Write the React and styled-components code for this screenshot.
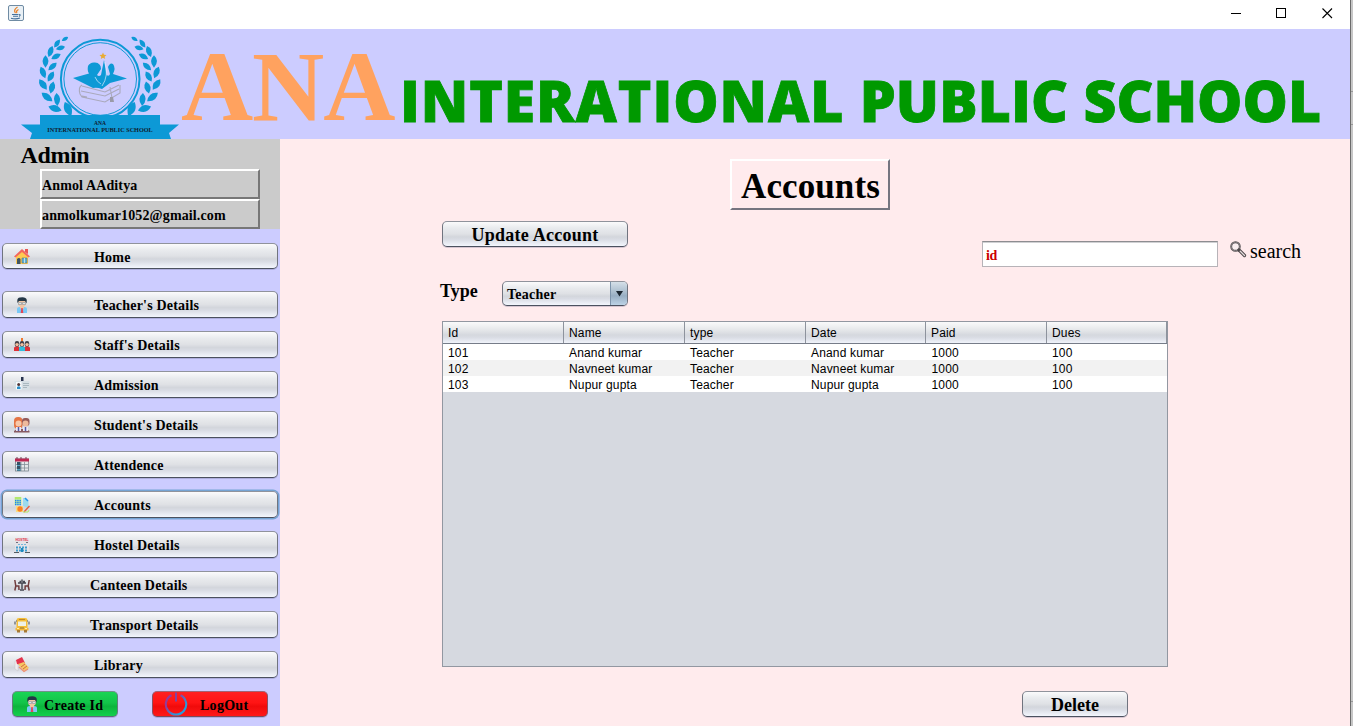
import React from "react";
import styled, { createGlobalStyle, css } from "styled-components";

const Global = createGlobalStyle`
  *, *::before, *::after { box-sizing: border-box; }
  html, body { margin: 0; padding: 0; overflow: hidden; }
  body { background: #c3c3c3; }
  button, input { margin: 0; padding: 0; font: inherit; color: inherit; outline: none; }
`;

const serif = `"Liberation Serif", "Times New Roman", serif`;
const sans = `"Liberation Sans", Arial, sans-serif`;

const Desktop = styled.div`
  display: flex;
  width: 1353px;
  height: 726px;
  background: #c6c6c6;
`;

const Window = styled.div`
  display: flex;
  flex-direction: column;
  width: 1351px;
  height: 726px;
  border-right: 1px solid #6b6b6b;
  font-family: ${serif};
  color: #000;
`;

const Behind = styled.div`
  flex: 1;
  display: flex;
  flex-direction: column;
  padding-top: 91px;
`;

const BehindLine = styled.div`
  height: 1px;
  margin-bottom: ${(p) => p.$after}px;
  background: #989898;
`;

const TitleBar = styled.div`
  display: flex;
  align-items: flex-start;
  justify-content: space-between;
  height: 29px;
  padding: 5px 17px 0 8px;
  background: #fff;
`;

const Controls = styled.div`
  display: flex;
  gap: 35px;
  padding-top: 3px;
`;

const Header = styled.header`
  display: flex;
  height: 110px;
  background: #ccccff;
`;

const Crest = styled.svg`
  flex: none;
  display: block;
`;

const Ana = styled.div`
  width: 220px;
  flex: none;
  height: 110px;
  padding: 7px 0 0 1px;
  font: bold 100px/102px ${serif};
  letter-spacing: -1.1px;
  color: #ffa25f;
`;

const School = styled.div`
  flex: none;
  height: 110px;
  padding-top: 24px;
  font: 800 57px/94px "Open Sans", sans-serif;
  letter-spacing: 0.5px;
  -webkit-text-stroke: 0.8px #009900;
  white-space: nowrap;
  color: #009900;
`;

const Word = styled.span`
  letter-spacing: ${(p) => p.$ls}px;
`;

const Body = styled.div`
  display: flex;
  flex: 1;
  min-height: 0;
`;

const Sidebar = styled.aside`
  width: 280px;
  flex: none;
  background: #ccccff;
`;

const Profile = styled.section`
  height: 90px;
  background: #cbcbcb;
`;

const Role = styled.div`
  height: 30px;
  padding: 2px 0 0 20.5px;
  font: bold 24px/28px ${serif};
  letter-spacing: -0.4px;
`;

const raised = css`
  border: 2px solid;
  border-color: #fff #777 #777 #fff;
`;

const ProfileField = styled.div`
  ${raised}
  width: 220px;
  height: 30px;
  margin-left: 40px;
  font: bold 14px/28px ${serif};
  letter-spacing: 0.13px;
  padding-top: 1px;
  white-space: nowrap;
`;

const tones = {
  plain: css`
    background: linear-gradient(#fbfbfc 0%, #e9ebee 25%, #dfe1e5 50%, #d3d6dc 62%, #d8dbe3 72%, #f3f6fd 100%);
    border-color: #90939c #70747f #4b515f #70747f;
  `,
  green: css`
    background: linear-gradient(#19d455 0%, #12c449 45%, #0cb43d 60%, #12d04d 100%);
    border-color: #6f9389 #60807c #5d6a7b #60807c;
  `,
  red: css`
    background: linear-gradient(#ff2020 0%, #ff1414 45%, #f00b0b 60%, #ff1919 100%);
    border-color: #a26473 #8a5262 #7b4a5d #8a5262;
  `,
};

const NimbusButton = styled.button`
  display: flex;
  align-items: center;
  width: ${(p) => p.$w}px;
  height: ${(p) => p.$h || 27}px;
  flex: none;
  border: 1px solid;
  border-radius: 5px;
  box-shadow: 0 1px 0 rgba(70, 70, 110, 0.22);
  ${(p) => tones[p.$tone || "plain"]}
  ${(p) =>
    p.$focused &&
    css`
      box-shadow: 0 0 0 1.5px #74a3d3;
    `}
`;

const NavButton = styled(NimbusButton)`
  padding-left: 11px;
  font: bold 14px/24px ${serif};
  white-space: nowrap;
`;

const NavLabel = styled.span`
  margin-left: ${(p) => p.$gap || 64}px;
  padding-top: 2px;
  letter-spacing: 0.2px;
`;

const Nav = styled.nav`
  display: flex;
  flex-direction: column;
  gap: 13px;
  padding: 14px 0 0 2px;

  & > :first-child {
    height: 26px;
    margin-bottom: 9px;
  }

  & > :first-child ${NavLabel} {
    padding-top: 3px;
  }
`;

const SessionRow = styled.div`
  display: flex;
  gap: 34px;
  padding: 13px 0 0 12px;
`;

const SessionButton = styled(NimbusButton)`
  padding-left: 11px;
  gap: ${(p) => p.$gap}px;
  font: bold 14px/21px ${serif};
  white-space: nowrap;

  span {
    padding-top: 3px;
    letter-spacing: 0.28px;
  }
`;

const Main = styled.main`
  flex: 1;
  padding: 20px 0 0 162px;
  background: #ffebed;
`;

const PageTitle = styled.h1`
  ${raised}
  border-color: #fff #757580 #757580 #fff;
  width: 160px;
  height: 51px;
  margin: 0 0 11px 288px;
  padding: 5px 0 0 1px;
  font: bold 35px/42px ${serif};
  letter-spacing: 0.1px;
  text-align: center;
`;

const ActionRow = styled.div`
  display: flex;
  align-items: flex-start;
  height: 60px;
`;

const ActionButton = styled(NimbusButton)`
  justify-content: center;
  font: bold 18px/22px ${serif};
  letter-spacing: ${(p) => p.$ls || 0}px;

  span {
    padding-top: 2px;
  }
`;

const SearchInput = styled.input`
  width: 236px;
  height: 26px;
  margin: 20px 0 0 354px;
  padding: 3px 0 0 3px;
  border: 1px solid #b7b3b8;
  border-top-color: #8d8d91;
  background: #fff;
  box-shadow: inset 0 1px 0 #d0d0d3;
  font: bold 14px/20px ${serif};
  letter-spacing: -0.4px;
  color: #cc0000;
`;

const SearchLabel = styled.div`
  display: flex;
  gap: 3px;
  margin: 18px 0 0 12px;
  font: 20px/24px ${serif};

  svg {
    margin-top: 2px;
  }
`;

const FilterRow = styled.div`
  display: flex;
  height: 40px;
  margin-left: -2px;
`;

const FilterLabel = styled.label`
  width: 62px;
  font: bold 18px/20px ${serif};
`;

const Select = styled(NimbusButton)`
  padding-left: 4px;
  justify-content: space-between;
  overflow: hidden;
  font: bold 14px/20px ${serif};
  letter-spacing: 0.25px;

  span {
    padding-top: 2px;
  }
`;

const SelectArrow = styled.div`
  display: flex;
  align-items: center;
  justify-content: center;
  width: 17px;
  height: 100%;
  border-left: 1px solid #7e94ab;
  background: linear-gradient(#d5dfe8 0%, #a9bccd 45%, #98aec3 60%, #bdd3e6 100%);
`;

const TablePane = styled.div`
  width: 726px;
  height: 346px;
  border: 1px solid #9297a1;
  background: #d6d9e0;
  font: 12px/16px ${sans};
`;

const HeadRow = styled.div`
  display: grid;
  grid-template-columns: 121px 121px 121px 120px 121px 120px;
  height: 22px;
  border-bottom: 1px solid #767c88;
  background: linear-gradient(#fafafb 0%, #e4e6e9 40%, #d5d8de 62%, #dadde5 75%, #f0f3fa 100%);
`;

const HeadCell = styled.div`
  padding: 3px 0 0 5px;
  border-right: 1px solid #8e939d;
  letter-spacing: 0.15px;
`;

const DataRow = styled.div`
  display: grid;
  grid-template-columns: 121px 121px 121px 120.5px 120.5px 120px;
  height: 16px;
  background: #fff;

  &:nth-child(odd) {
    background: #f2f2f2;
  }
`;

const DataCell = styled.div`
  padding: 1px 0 0 5px;
  letter-spacing: 0.16px;
  white-space: nowrap;
`;

const Footer = styled.div`
  padding: 24px 0 0 580px;
`;

const Leaf = ({ x, y, r, s = 1 }) => (
  <path d="M0 -6.2Q6 -.5 0 6.2Q-6 -.5 0 -6.2Z" transform={`translate(${x} ${y}) rotate(${r}) scale(${s})`} />
);

const leaves = [
  [65, 10.5, 58, 0.6], [57, 15, 35, 0.8], [60.5, 19.5, 74, 0.75],
  [50.5, 23, 20, 0.95], [56, 28, 62, 0.85], [45.5, 33, 0, 1.0],
  [52.5, 38, 48, 0.9], [43, 44, -22, 1.0], [50.8, 48, 30, 0.95],
  [43, 56, -35, 1.05], [52, 59, 14, 1.0], [47, 68.5, -52, 1.1],
  [57, 71, -4, 1.05], [55, 80, -74, 1.1], [68, 80.5, -24, 1.25],
];

const Logo = () => (
  <Crest width="180" height="110" viewBox="0 0 180 110">
    <g fill="#0d99d6">
      {leaves.map(([x, y, r, s]) => (
        <Leaf key={`l${x}-${y}`} x={x} y={y - 0.5} r={r} s={s} />
      ))}
      <g transform="translate(199.500 0) scale(-1 1)">
        {leaves.map(([x, y, r, s]) => (
          <Leaf key={`r${x}-${y}`} x={x} y={y - 0.5} r={r} s={s} />
        ))}
      </g>
      <circle cx="100.200" cy="50" r="39.300" fill="none" stroke="#0d99d6" strokeWidth="2" />
      <circle cx="100.200" cy="50" r="36.300" fill="none" stroke="#0d99d6" strokeWidth="1" />
      <path d="M21 95.500H40V86H160V95.500H179L169 104L171 110H30L32 104Z" />
      <path d="M73 49L89 44.500Q87 42 88 37Q90 33 95 33.500Q101 34 101 40L97 46Q99 48 101 46L104 31L106.500 46Q109 48 110 45L108 38Q110 33 113 35Q116 39 113 45L127 49.500L110 54L102 60Q97 58 93 59Z" />
    </g>
    <path d="M95 48Q97 53 101 55M105 33Q109 47 102 57" fill="none" stroke="#dcecff" strokeWidth=".7" />
    <g fill="none" stroke="#aaa9bc" strokeWidth="1.100">
      <path d="M82 56Q78 58 80 65L82 68L105 73L120 64V56M82 57L105 63L119 56M81 62L105 67L119 60M82 67L87 68M110 58L112 69" />
    </g>
    <path d="M110 68L113 68L114 73H110Z" fill="#9a9aa8" />
    <path d="M103 23.500L104 25.800L106.500 26L104.600 27.700L105.200 30L103 28.800L100.800 30L101.300 27.700L99.500 26L102 25.800Z" fill="#e8ac35" />
    <g fill="#10202e" fontFamily="Liberation Serif, serif" fontWeight="bold" textAnchor="middle">
      <text x="100" y="96.300" fontSize="5.500" textLength="12">ANA</text>
      <text x="100" y="103" fontSize="6.300" textLength="105.500" lengthAdjust="spacingAndGlyphs">INTERNATIONAL PUBLIC SCHOOL</text>
    </g>
  </Crest>
);

const JavaIcon = () => (
  <svg width="16" height="16" viewBox="0 0 16 16">
    <rect x=".5" y=".5" width="15" height="15" rx="1.500" fill="#e9f0f5" stroke="#6f8ba3" />
    <path d="M9.500 2Q5 5 7.500 8M10.500 4.500Q7.500 6 9 8" fill="none" stroke="#e8822b" strokeWidth="1.300" />
    <path d="M4 9.500H10.500M5 11.300H10M3 13.300Q8 14.500 12 13M11 9.500Q13.500 9.500 11 11.500" fill="none" stroke="#44719c" strokeWidth="1.100" />
  </svg>
);

const Icon = ({ children }) => (
  <svg width="16" height="16" viewBox="0 0 16 16">
    {children}
  </svg>
);

const Person = () => (
  <>
    <path d="M3 16V12Q3 10 6 10H10Q13 10 13 12V16Z" fill="#79c9f6" />
    <path d="M6 9H10V11L8 13L6 11Z" fill="#f3c4a1" />
    <path d="M7.300 11H8.700L9.300 16H6.700Z" fill="#e14858" />
    <circle cx="8" cy="6" r="4" fill="#f0c6a5" />
    <path d="M3.500 6Q2.500 1 6 .5Q12 -.5 12.800 3L12.500 6.500L11 4L5 4Z" fill="#243746" />
    <path d="M4.500 5.500H7.500V7.500H4.500ZM8.500 5.500H11.500V7.500H8.500Z" fill="#d9e3e8" stroke="#7b8790" strokeWidth=".5" />
  </>
);

const icons = {
  home: (
    <Icon>
      <path d="M2 8L8 3L14 8V16H2Z" fill="#ffca50" />
      <path d="M11 1H14V6L11 4Z" fill="#e95755" />
      <path d="M0 8.500L8 1L16 8.500L14.500 9.500L8 4L1.500 9.500Z" fill="#f3675e" />
      <path d="M3 16V11Q5 9 6.500 11V16Z" fill="#405563" />
      <path d="M8 10H13V15H8Z" fill="#5cafd2" stroke="#59727e" strokeWidth=".6" />
      <path d="M10.500 10V15" stroke="#e7f4fa" strokeWidth=".7" />
    </Icon>
  ),
  teacher: <Icon><Person /></Icon>,
  staff: (
    <Icon>
      <path d="M7 1H9V5H7Z" fill="#ee7931" />
      {[3, 13, 8].map((x) => (
        <g key={x}>
          <rect x={x - 2.2} y="4" width="4.400" height="6" rx="2" fill="#45434b" />
          <circle cx={x} cy="7.600" r="1.700" fill="#f0bf9d" />
          <path d={`M${x - 3} 14V10.500Q${x} 8.500 ${x + 3} 10.500V14Z`} fill={x === 8 ? "#31bddd" : "#dd3038"} />
        </g>
      ))}
    </Icon>
  ),
  admission: (
    <Icon>
      <rect x=".5" y="4" width="15" height="9" fill="#d5dfe4" />
      <path d="M7 0H9.500V4H7Z" fill="#28334e" />
      <rect x="2" y="5" width="5.500" height="7.500" fill="#f5fafc" />
      <circle cx="4.700" cy="7.600" r="1.500" fill="#53383a" />
      <path d="M3 12V10Q4.700 8.500 6.500 10V12Z" fill="#2b8fc9" />
      <path d="M9 6.500H15M9 8.500H15M9 10.500H13" stroke="#a9b8bf" />
    </Icon>
  ),
  students: (
    <Icon>
      <path d="M0 15.500H15.500V14L12 12H3L0 14Z" fill="#875a63" />
      <rect x="0" y="0" width="8.500" height="12" rx="4" fill="#e57545" />
      <rect x="8" y="1" width="7.500" height="8" rx="3" fill="#955a58" />
      <circle cx="4.500" cy="6.500" r="3" fill="#f8c8a9" />
      <circle cx="11.500" cy="6.500" r="3" fill="#efba9d" />
      <path d="M2 10H7V14H2ZM9 10H14V14H9Z" fill="#ece9f7" />
      <path d="M4.500 10V14M11.500 10V14" stroke="#5259a8" strokeWidth="1.500" />
    </Icon>
  ),
  attendance: (
    <Icon>
      <rect x="1.500" y="2" width="13" height="12" fill="#e4e7ea" stroke="#7b8790" strokeWidth=".8" />
      <path d="M1 1.500H15V4.500H1Z" fill="#bd2852" />
      <path d="M3 0V2M7 0V2M12 0V2" stroke="#784152" />
      <path d="M2 7.500H14M2 11H14M7 5V14M10.500 5V14" stroke="#828f98" strokeWidth=".8" />
      <path d="M3 5H6.500V14H3Z" fill="#345366" />
      <path d="M3 8H6.500V9H3ZM3 12H6.500V13.500H3Z" fill="#54a2c0" />
    </Icon>
  ),
  accounts: (
    <Icon>
      <rect x=".5" y="0" width="7" height="8" fill="#d0f49a" />
      <path d="M1 3.500H7M1 5.500H7M1 7.500H7" stroke="#1884f2" strokeWidth="1.500" strokeDasharray="1.500 .7" />
      <path d="M1 1H7" stroke="#95de42" />
      <path d="M9 1H12L14.500 4V11L9 9Z" fill="#9bdbed" />
      <path d="M11 1L14 4" stroke="#2494ef" strokeWidth="1.500" />
      <path d="M2 9H9V15H2Z" fill="#f9dd80" />
      <circle cx="6" cy="12" r="2.700" fill="#fa8124" />
      <path d="M10 15L15.500 9" stroke="#e56040" strokeWidth="1.500" />
      <path d="M9 15H14L15 13" stroke="#b2e86a" fill="none" />
    </Icon>
  ),
  hostel: (
    <Icon>
      <path d="M1 1H15V15H1Z" fill="#e4e1e6" />
      <text x="1.500" y="4.300" fontFamily="Liberation Sans" fontWeight="bold" fontSize="4" textLength="13" lengthAdjust="spacingAndGlyphs" fill="#e3334b">HOSTEL</text>
      <path d="M2 5.500H4M12 5.500H14" stroke="#706f79" />
      <path d="M2 10.500H14M2 13.500H14" stroke="#419dcc" strokeWidth="2" strokeDasharray="2 1" />
      <path d="M4 7.500H12" stroke="#76b9dc" strokeDasharray="2 1" />
      <path d="M7 11H9V15H7Z" fill="#1e88bd" />
      <path d="M0 15.500H5M11 15.500H16" stroke="#535c64" />
    </Icon>
  ),
  canteen: (
    <Icon>
      <path d="M.8 3L1.800 9H4.800L5 13M1.800 9L.8 13.500M15.200 3L14.200 9H11.200L11 13M14.200 9L15.200 13.500" fill="none" stroke="#713d3e" strokeWidth="1.500" />
      <path d="M4 6H12M8 6V12M6 13H10M5.500 4.500H7M9 4.500H11M8 2.500V5" fill="none" stroke="#444650" strokeWidth="1.400" />
    </Icon>
  ),
  transport: (
    <Icon>
      <path d="M2.500 13V3Q2.500 1 5 1H11Q13.500 1 13.500 3V13Z" fill="#f5bd37" />
      <path d="M4 4.500H12V9H4Z" fill="#edf1e7" />
      <path d="M5 2.500H11" stroke="#bc882e" />
      <path d="M1 4.500V7.500M15 4.500V7.500" stroke="#596169" strokeWidth="1.200" />
      <path d="M2 4H3M13 4H14" stroke="#596169" />
      <path d="M1.500 11H14.500V13.500H1.500Z" fill="#f2b63b" />
      <path d="M3 13H6V15.500H3ZM10 13H13V15.500H10Z" fill="#a77b34" />
      <path d="M6 11H10" stroke="#8d7239" />
      <path d="M3 11.500H5M11 11.500H13" stroke="#fff1a5" />
    </Icon>
  ),
  library: (
    <Icon>
      <path d="M1 4L4 3V14L1 12Z" fill="#f0eef0" stroke="#bbb" strokeWidth=".4" />
      <path d="M2 3L8 0L11 6L7 8L3 7Z" fill="#e4334c" />
      <path d="M4 7L10 5L15 11L10 14Z" fill="#f5c764" />
      <path d="M7 10L11 7M9 12L13 9" stroke="#d56a46" />
      <path d="M5 10L10 14.500L14 12" fill="none" stroke="#ee8f73" strokeWidth="1.300" />
    </Icon>
  ),
};

const PowerIcon = () => (
  <svg width="24" height="24" viewBox="0 0 24 24">
    <defs>
      <linearGradient id="power" x1="0" y1="0" x2="1" y2="1">
        <stop offset="0.3" stopColor="#933c9b" />
        <stop offset="0.75" stopColor="#269ddc" />
      </linearGradient>
    </defs>
    <path d="M7.500 3.200A10.200 10.200 0 1 0 16.500 3.200" fill="none" stroke="url(#power)" strokeWidth="2.100" />
    <path d="M12 .5V9.500" stroke="#84439f" strokeWidth="2" />
  </svg>
);

const SearchIcon = () => (
  <svg width="17" height="17" viewBox="0 0 17 17">
    <circle cx="5.500" cy="5.500" r="4.300" fill="#f9eef0" stroke="#504b4e" strokeWidth="1.900" />
    <circle cx="5.500" cy="5.500" r="4.300" fill="none" stroke="#a8a2a5" strokeWidth=".6" />
    <path d="M9 9L14.500 14.500" stroke="#4b4648" strokeWidth="3.200" strokeLinecap="round" />
    <path d="M10.300 10.300L14.500 14.500" stroke="#e5dcde" strokeWidth="1.300" strokeLinecap="round" />
  </svg>
);

const navItems = [
  ["Home", "home"],
  ["Teacher's Details", "teacher"],
  ["Staff's Details", "staff"],
  ["Admission", "admission"],
  ["Student's Details", "students"],
  ["Attendence", "attendance"],
  ["Accounts", "accounts"],
  ["Hostel Details", "hostel"],
  ["Canteen Details", "canteen", 60],
  ["Transport Details", "transport", 60],
  ["Library", "library"],
];

const columns = ["Id", "Name", "type", "Date", "Paid", "Dues"];
const rows = [
  ["101", "Anand kumar", "Teacher", "Anand kumar", "1000", "100"],
  ["102", "Navneet kumar", "Teacher", "Navneet kumar", "1000", "100"],
  ["103", "Nupur gupta", "Teacher", "Nupur gupta", "1000", "100"],
];

export default function App() {
  return (
    <>
      <Global />
      <Desktop>
        <Window>
          <TitleBar>
            <JavaIcon />
            <Controls>
              <svg width="10" height="10" shapeRendering="crispEdges"><path d="M0 5.500H10" stroke="#000" /></svg>
              <svg width="11" height="11" shapeRendering="crispEdges"><rect x=".5" y=".5" width="9" height="9" fill="none" stroke="#000" /></svg>
              <svg width="11" height="11"><path d="M.5 .5L10 10M10 .5L.5 10" stroke="#000" strokeWidth="1.100" /></svg>
            </Controls>
          </TitleBar>
          <Header>
            <Logo />
            <Ana>ANA</Ana>
            <School>
              <Word $ls={0.92}>INTERATIONAL</Word> <Word $ls={0.15}>PUBLIC</Word> <Word $ls={0}>SCHOOL</Word>
            </School>
          </Header>
          <Body>
            <Sidebar>
              <Profile>
                <Role>Admin</Role>
                <ProfileField>Anmol AAditya</ProfileField>
                <ProfileField>anmolkumar1052@gmail.com</ProfileField>
              </Profile>
              <Nav>
                {navItems.map(([label, icon, gap]) => (
                  <NavButton key={label} $w={276} $focused={label === "Accounts"}>
                    {icons[icon]}
                    <NavLabel $gap={gap}>{label}</NavLabel>
                  </NavButton>
                ))}
              </Nav>
              <SessionRow>
                <SessionButton $w={106} $h={26} $tone="green" $gap={4}>
                  {icons.teacher}
                  <span>Create Id</span>
                </SessionButton>
                <SessionButton $w={116} $h={26} $tone="red" $gap={12}>
                  <PowerIcon />
                  <span>LogOut</span>
                </SessionButton>
              </SessionRow>
            </Sidebar>
            <Main>
              <PageTitle>Accounts</PageTitle>
              <ActionRow>
                <ActionButton $w={186} $h={26} $ls={0.25}><span>Update Account</span></ActionButton>
                <SearchInput defaultValue="id" />
                <SearchLabel>
                  <SearchIcon />
                  search
                </SearchLabel>
              </ActionRow>
              <FilterRow>
                <FilterLabel>Type</FilterLabel>
                <Select $w={126} $h={25}>
                  <span>Teacher</span>
                  <SelectArrow>
                    <svg width="7" height="6" viewBox="0 0 7 6"><path d="M0 0H7L3.500 5.500Z" fill="#1b2631" /></svg>
                  </SelectArrow>
                </Select>
              </FilterRow>
              <TablePane>
                <HeadRow>
                  {columns.map((c) => <HeadCell key={c}>{c}</HeadCell>)}
                </HeadRow>
                {rows.map((r) => (
                  <DataRow key={r[0]}>
                    {r.map((v, i) => <DataCell key={i}>{v}</DataCell>)}
                  </DataRow>
                ))}
              </TablePane>
              <Footer>
                <ActionButton $w={106} $h={26}><span>Delete</span></ActionButton>
              </Footer>
            </Main>
          </Body>
        </Window>
        <Behind>
          <BehindLine $after={32} />
          <BehindLine $after={576} />
          <BehindLine $after={0} />
        </Behind>
      </Desktop>
    </>
  );
}
